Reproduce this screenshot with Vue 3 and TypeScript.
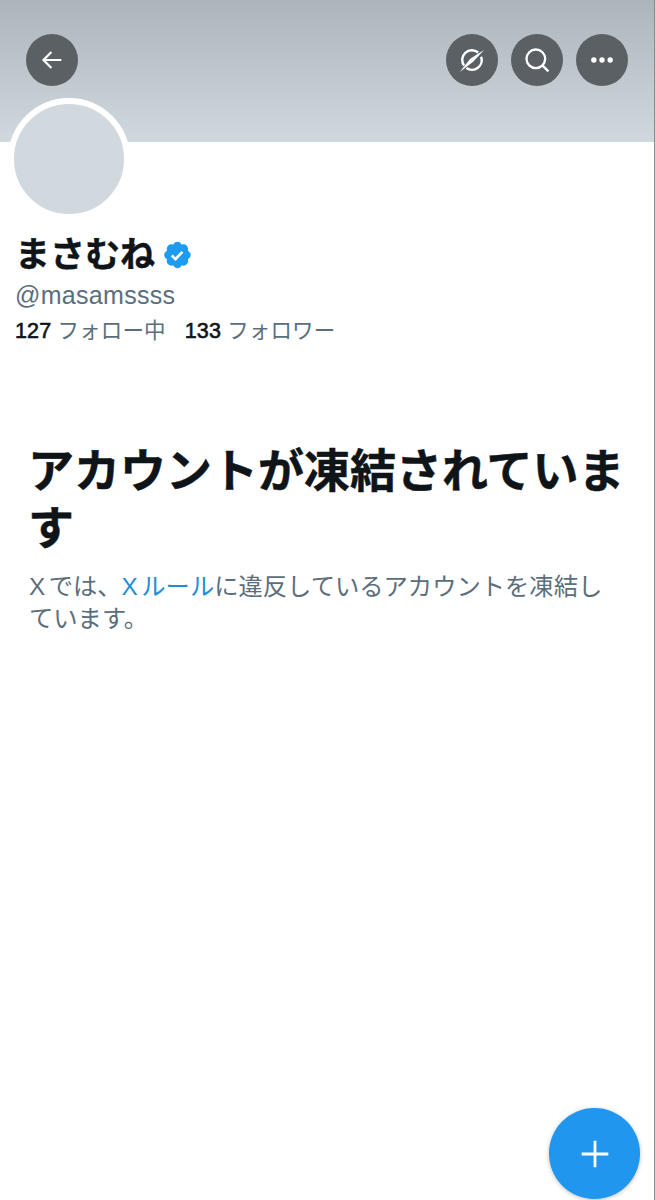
<script setup lang="ts">
const stats = [
  { count: '127', label: 'フォロー中' },
  { count: '133', label: 'フォロワー' },
];
</script>

<template>
  <div class="page">
    <header class="banner">
      <button class="round" aria-label="戻る">
        <svg viewBox="0 0 24 24" class="icon">
          <path d="M20 12H5M11.5 5.2 4.7 12l6.8 6.8" fill="none" stroke="#fff" stroke-width="1.9" />
        </svg>
      </button>
      <div class="actions">
        <button class="round" aria-label="Grok">
          <svg viewBox="0 0 24 24" class="icon">
            <path d="M17.3 5.6A8.3 8.3 0 0 0 5.2 16.8M7.2 18.800A8.3 8.3 0 0 0 19.8 9.2" fill="none" stroke="#fff" stroke-width="2.1" />
            <path d="M22.3 3.4 13 13.5 1.5 22.3 10.5 11z" fill="#fff" />
          </svg>
        </button>
        <button class="round" aria-label="検索">
          <svg viewBox="0 0 24 24" class="icon">
            <circle cx="11" cy="11" r="8" fill="none" stroke="#fff" stroke-width="2" />
            <path d="m16.8 16.8 5 5" fill="none" stroke="#fff" stroke-width="2" />
          </svg>
        </button>
        <button class="round" aria-label="その他">
          <svg viewBox="0 0 24 24" class="icon">
            <circle cx="5" cy="12" r="2.3" fill="#fff" />
            <circle cx="12" cy="12" r="2.3" fill="#fff" />
            <circle cx="19" cy="12" r="2.3" fill="#fff" />
          </svg>
        </button>
      </div>
    </header>

    <section class="profile">
      <div class="avatar"></div>
      <div class="name-row">
        <h2 class="name">まさむね</h2>
        <svg viewBox="0 0 22 22" class="badge">
          <path fill="#1d9bf0" d="M20.4 11c0-1.3-.8-2.4-2-2.9.5-1.2.2-2.6-.7-3.5-.9-.9-2.3-1.2-3.5-.7-.5-1.2-1.6-2-2.9-2S8.900 2.700 8.400 3.900c-1.200-.5-2.600-.2-3.500.7-.9.9-1.200 2.300-.7 3.500-1.200.5-2 1.600-2 2.900s.8 2.400 2 2.900c-.5 1.200-.2 2.600.7 3.500.9.9 2.300 1.200 3.500.7.5 1.200 1.600 2 2.900 2s2.400-.8 2.900-2c1.200.5 2.600.2 3.500-.7.9-.9 1.200-2.300.7-3.500 1.200-.5 2-1.600 2-2.900z" />
          <path d="m7.400 11.300 2.600 2.500 4.700-5" fill="none" stroke="#fff" stroke-width="1.8" />
        </svg>
      </div>
      <p class="handle">@masamssss</p>
      <div class="stats">
        <span v-for="stat in stats" :key="stat.label" class="stat">
          <b>{{ stat.count }}</b> {{ stat.label }}
        </span>
      </div>
    </section>

    <section class="notice">
      <h1>アカウントが凍結されています</h1>
      <p><span class="x">X</span>では、<a href="#"><span class="x">X</span>ルール</a>に違反しているアカウントを凍結しています。</p>
    </section>

    <button class="fab" aria-label="投稿">
      <svg viewBox="0 0 24 24">
        <path d="M12 2v20M2 12h20" fill="none" stroke="#fff" stroke-width="2.1" />
      </svg>
    </button>
  </div>
</template>

<style scoped>
.page {
  position: relative;
  height: 1200px;
  box-sizing: border-box;
  overflow: hidden;
  background: #fff;
  border-right: 1px solid #8a8d90;
  color: #0f1419;
  font-family: "Liberation Sans", "Noto Sans CJK JP", sans-serif;
}

.banner {
  height: 142px;
  box-sizing: border-box;
  padding: 34px 26px 0;
  display: flex;
  justify-content: space-between;
  align-items: flex-start;
  background: linear-gradient(#adb5bc, #d0d9de);
}

.actions {
  display: flex;
  gap: 13px;
}

.round {
  width: 52px;
  height: 52px;
  padding: 0;
  border: none;
  border-radius: 50%;
  background: #5b6065;
  display: flex;
  align-items: center;
  justify-content: center;
}

.icon {
  width: 28px;
  height: 28px;
}

.profile {
  padding: 0 15px;
}

.avatar {
  width: 110px;
  height: 110px;
  box-sizing: content-box;
  margin: -44px 0 0 -7px;
  border: 6px solid #fff;
  border-radius: 50%;
  background: #d1d9de;
  position: relative;
}

.name-row {
  display: flex;
  align-items: center;
  gap: 6px;
  margin-top: 12px;
}

.name {
  margin: 0;
  font-size: 35px;
  line-height: 46px;
  font-weight: 700;
  -webkit-text-stroke: 0.4px #0f1419;
}

.badge {
  width: 32px;
  height: 32px;
}

.handle {
  margin: 2px 0 0;
  font-size: 25px;
  letter-spacing: 0.3px;
  line-height: 30px;
  color: #5b6e7c;
}

.stats {
  display: flex;
  gap: 19px;
  margin-top: 7px;
  font-size: 21.5px;
  letter-spacing: 0.15px;
  line-height: 28px;
  color: #5b6e7c;
}

.stat b {
  font-weight: 400;
  -webkit-text-stroke: 0.6px #0f1419;
  color: #0f1419;
}

.notice {
  padding: 0 28px;
  margin-top: 98px;
}

.notice h1 {
  margin: 0;
  font-size: 46px;
  line-height: 57px;
  font-weight: 700;
  -webkit-text-stroke: 0.5px #0f1419;
}

.notice p {
  max-width: 585px;
  margin: 14px 0 0 1px;
  font-size: 24.3px;
  line-height: 32px;
  color: #5b6e7c;
}

.notice .x {
  letter-spacing: 3.5px;
}

.notice a {
  color: #1d8fd6;
  text-decoration: none;
}

.fab {
  position: absolute;
  left: 549px;
  top: 1108px;
  width: 91px;
  height: 91px;
  padding: 0;
  border: none;
  border-radius: 50%;
  background: #2196ee;
  box-shadow: 0 1px 4px rgba(0, 0, 0, 0.25);
  display: flex;
  align-items: center;
  justify-content: center;
}

.fab svg {
  width: 32px;
  height: 32px;
}
</style>
